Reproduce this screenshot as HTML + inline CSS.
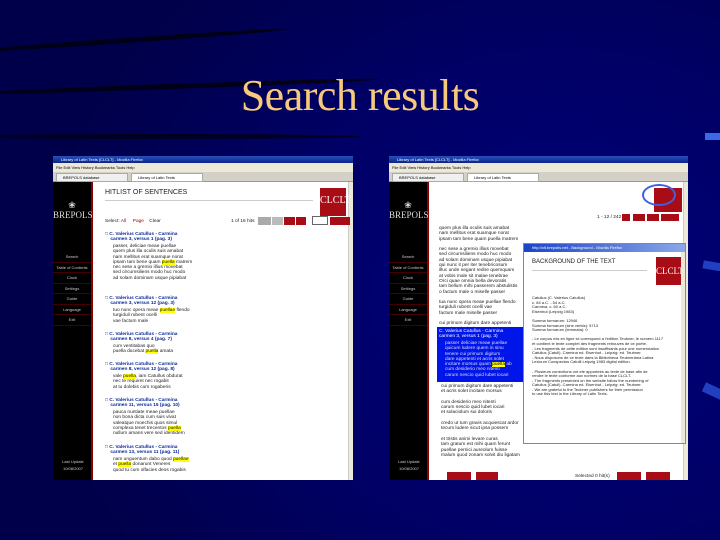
<!DOCTYPE html>
<html><head><meta charset="utf-8"><style>
*{margin:0;padding:0;box-sizing:border-box}
body{width:720px;height:540px;overflow:hidden;position:relative;font-family:"Liberation Sans",sans-serif;
background:radial-gradient(ellipse 520px 440px at 560px 300px,#00007c 0%,#000066 55%,#00004a 100%);}
.ab{position:absolute}
.streak{position:absolute;height:5px;border-radius:50%;background:#000018}
h1{position:absolute;left:0;width:720px;top:70px;text-align:center;font:44px "Liberation Serif",serif;color:#f7c97a;font-weight:normal;letter-spacing:-0.5px}
.win{position:absolute;background:#fff;overflow:hidden}
.tb{position:absolute;left:0;right:0;top:0;height:7px;background:linear-gradient(#2a4fb8,#0a248a);color:#fff;font-size:4px;line-height:7px;padding-left:8px}
.mb{position:absolute;left:0;right:0;top:7px;height:9px;background:#ece9d8;font-size:4px;line-height:9px;padding-left:3px;color:#000}
.tabs{position:absolute;left:0;right:0;top:16px;height:10px;background:#d4d0c8;border-bottom:1px solid #999}
.tab{position:absolute;top:1px;height:9px;background:#f0f0f0;border:1px solid #aaa;font-size:4px;line-height:8px;padding-left:6px}
.side{position:absolute;left:0;top:26px;bottom:0;width:40px;background:#000;border-right:2px solid #8b0000;color:#ccc;font-size:4px}
.side div{height:10.5px;line-height:10px;text-align:center;border-bottom:1px solid #400}
.brep{font:9px "Liberation Serif",serif;color:#ddd;text-align:center;margin-top:18px;border:none!important;height:auto!important}
.t{position:absolute;font-size:4.8px;line-height:5.3px;color:#222;white-space:nowrap}
.lk{color:#0a2a9a;font-weight:bold}
.hl{background:#ff0}
.red{position:absolute;background:#a80d16}
.sb{position:absolute;right:0;top:26px;bottom:0;width:5px;background:#ece9d8;border-left:1px solid #ccc}
</style></head><body>
<div class="streak" style="left:-40px;top:38px;width:330px;transform:rotate(-4deg)"></div>
<div class="streak" style="left:-40px;top:84px;width:420px;transform:rotate(-2deg)"></div>
<div class="streak" style="left:-40px;top:134px;width:400px;opacity:.8"></div>
<div class="ab" style="left:705px;top:133px;width:15px;height:7px;background:#3a6ae8"></div>
<div class="ab" style="left:703px;top:262px;width:20px;height:8px;background:#2040c0;transform:rotate(10deg)"></div>
<div class="ab" style="left:703px;top:386px;width:20px;height:10px;background:#2040c0;transform:rotate(25deg)"></div>
<h1>Search results</h1>

<!-- LEFT -->
<div class="win" style="left:53px;top:156px;width:300px;height:324px">
<div class="tb">Library of Latin Texts [CLCLT] - Mozilla Firefox</div>
<div class="mb">File Edit View History Bookmarks Tools Help</div>
<div class="tabs"><div class="tab" style="left:3px;width:72px">BREPOLS database</div><div class="tab" style="left:78px;width:72px;background:#fff">Library of Latin Texts</div></div>
<div class="side"><div class="brep">&#10048;<br>BREPOLS</div><div style="margin-top:32px">Search</div><div>Table of Contents</div><div>Clock</div><div>Settings</div><div>Guide</div><div>Language</div><div>Exit</div>
<div style="position:absolute;bottom:8px;width:40px;border:none;line-height:7px;height:auto">Last Update<br>10/08/2007</div></div>
<div class="sb"></div>
<div class="t" style="left:52px;top:34px;font-size:7px;color:#222">HITLIST OF SENTENCES</div>
<div class="ab" style="left:52px;top:44px;width:208px;height:1px;background:#ccc"></div>
<div class="red" style="left:267px;top:32px;width:26px;height:28px;color:#fff;font:10px 'Liberation Serif',serif;text-align:center;line-height:26px">CLCLT</div>
<div class="t" style="left:52px;top:63px">Select: <span style="color:#a00">All</span> &nbsp;&nbsp;&nbsp; <span style="color:#a00">Page</span> &nbsp;&nbsp; Clear</div>
<div class="ab" style="left:205px;top:61px;width:13px;height:8px;background:#aaa"></div>
<div class="ab" style="left:219px;top:61px;width:11px;height:8px;background:#bbb"></div>
<div class="red" style="left:231px;top:61px;width:11px;height:8px"></div>
<div class="red" style="left:243px;top:61px;width:10px;height:8px"></div>
<div class="ab" style="left:259px;top:60px;width:16px;height:9px;border:1px solid #666"></div>
<div class="red" style="left:277px;top:61px;width:20px;height:8px"></div>
<div class="t" style="left:178px;top:63px">1 of 16 hits</div>
<div class="t" style="left:52px;top:76px">&#9633; <span class="lk">C. Valerius Catullus - Carmina<br>&nbsp;&nbsp;&nbsp;&nbsp;carmen 3, versus 1 (pag. 3)</span></div>
<div class="t" style="left:60px;top:88px">passer, deliciae meae puellae<br>quem plus illa oculis suis amabat<br>nam mellitus erat suamque norat<br>ipsam tam bene quam <span class="hl">puella</span> matrem<br>nec sese a gremio illius movebat<br>sed circumsiliens modo huc modo<br>ad solam dominam usque pipiabat</div>
<div class="t" style="left:52px;top:140px">&#9633; <span class="lk">C. Valerius Catullus - Carmina<br>&nbsp;&nbsp;&nbsp;&nbsp;carmen 3, versus 12 (pag. 3)</span></div>
<div class="t" style="left:60px;top:152px">tuo nunc opera meae <span class="hl">puellae</span> flendo<br>turgiduli rubent ocelli<br>vae factum male</div>
<div class="t" style="left:52px;top:176px">&#9633; <span class="lk">C. Valerius Catullus - Carmina<br>&nbsp;&nbsp;&nbsp;&nbsp;carmen 8, versus 4 (pag. 7)</span></div>
<div class="t" style="left:60px;top:188px">cum ventitabas quo<br>puella ducebat <span class="hl">puella</span> amata</div>
<div class="t" style="left:52px;top:206px">&#9633; <span class="lk">C. Valerius Catullus - Carmina<br>&nbsp;&nbsp;&nbsp;&nbsp;carmen 8, versus 12 (pag. 8)</span></div>
<div class="t" style="left:60px;top:218px">vale <span class="hl">puella</span>, iam Catullus obdurat<br>nec te requiret nec rogabit<br>at tu dolebis cum rogaberis</div>
<div class="t" style="left:52px;top:242px">&#9633; <span class="lk">C. Valerius Catullus - Carmina<br>&nbsp;&nbsp;&nbsp;&nbsp;carmen 11, versus 15 (pag. 10)</span></div>
<div class="t" style="left:60px;top:254px">pauca nuntiate meae puellae<br>non bona dicta cum suis vivat<br>valeatque moechis quos simul<br>complexa tenet trecentos <span class="hl">puella</span><br>nullum amans vere sed identidem</div>
<div class="t" style="left:52px;top:289px">&#9633; <span class="lk">C. Valerius Catullus - Carmina<br>&nbsp;&nbsp;&nbsp;&nbsp;carmen 13, versus 11 (pag. 11)</span></div>
<div class="t" style="left:60px;top:301px">nam unguentum dabo quod <span class="hl">puellae</span><br>et <span class="hl">puella</span> donarunt Veneres<br>quod tu cum olfacies deos rogabis</div>
</div>

<!-- RIGHT -->
<div class="win" style="left:389px;top:156px;width:299px;height:324px">
<div class="tb">Library of Latin Texts [CLCLT] - Mozilla Firefox</div>
<div class="mb">File Edit View History Bookmarks Tools Help</div>
<div class="tabs"><div class="tab" style="left:3px;width:72px">BREPOLS database</div><div class="tab" style="left:78px;width:72px;background:#fff">Library of Latin Texts</div></div>
<div class="side"><div class="brep">&#10048;<br>BREPOLS</div><div style="margin-top:32px">Search</div><div>Table of Contents</div><div>Clock</div><div>Settings</div><div>Guide</div><div>Language</div><div>Exit</div>
<div style="position:absolute;bottom:8px;width:40px;border:none;line-height:7px;height:auto">Last Update<br>10/08/2007</div></div>
<div class="sb"></div>
<div class="red" style="left:265px;top:32px;width:28px;height:24px"></div>
<div class="ab" style="left:253px;top:28px;width:34px;height:22px;border:2px solid #4060e0;border-radius:50%"></div>
<div class="red" style="left:233px;top:58px;width:8px;height:7px"></div>
<div class="red" style="left:244px;top:58px;width:12px;height:7px"></div>
<div class="red" style="left:258px;top:58px;width:12px;height:7px"></div>
<div class="red" style="left:272px;top:58px;width:18px;height:7px"></div>
<div class="t" style="left:208px;top:59px">1 - 12 / 242</div>
<div class="t" style="left:50px;top:70px">quem plus illa oculis suis amabat<br>nam mellitus erat suamque norat<br>ipsam tam bene quam puella matrem<br><br>nec sese a gremio illius movebat<br>sed circumsiliens modo huc modo<br>ad solam dominam usque pipiabat<br>qui nunc it per iter tenebricosum<br>illuc unde negant redire quemquam<br>at vobis male sit malae tenebrae<br>Orci quae omnia bella devoratis<br>tam bellum mihi passerem abstulistis<br>o factum male o miselle passer<br><br>tua nunc opera meae puellae flendo<br>turgiduli rubent ocelli vae<br>factum male miselle passer<br><br>cui primum digitum dare appetenti<br>et acris solet incitare morsus</div>
<div class="ab" style="left:48px;top:171px;width:86px;height:55px;background:#0015e8"></div>
<div class="t" style="left:50px;top:173px;color:#fff">C. Valerius Catullus - Carmina<br>carmen 3, versus 1 (pag. 3)</div>
<div class="t" style="left:56px;top:185px;color:#dde">passer deliciae meae puellae<br>quicum ludere quem in sinu<br>tenere cui primum digitum<br>dare appetenti et acris solet<br>incitare morsus quam <span class="hl" style="color:#000">puella</span> ab<br>cum desiderio meo nitenti<br>carum nescio quid lubet iocari</div>
<div class="t" style="left:52px;top:228px">cui primum digitum dare appetenti<br>et acris solet incitare morsus<br><br>cum desiderio meo nitenti<br>carum nescio quid lubet iocari<br>et solaciolum sui doloris<br><br>credo ut tum gravis acquiescat ardor<br>tecum ludere sicut ipsa possem<br><br>et tristis animi levare curas<br>tam gratum est mihi quam ferunt<br>puellae pernici aureolum fuisse<br>malum quod zonam solvit diu ligatam</div>
<div class="red" style="left:58px;top:316px;width:24px;height:8px"></div>
<div class="red" style="left:87px;top:316px;width:22px;height:8px"></div>
<div class="t" style="left:186px;top:318px">Selected 0 hit(s)</div>
<div class="red" style="left:228px;top:316px;width:24px;height:8px"></div>
<div class="red" style="left:257px;top:316px;width:24px;height:8px"></div>
<!-- popup -->
<div class="ab" style="left:134px;top:87px;width:163px;height:201px;background:#fff;border:1px solid #888">
<div class="tb" style="height:8px;background:linear-gradient(90deg,#1a44c8,#8aa8e8)">http://clt.brepolis.net - Background - Mozilla Firefox</div>
<div class="t" style="left:8px;top:16px;font-size:6px;color:#222">BACKGROUND OF THE TEXT</div>
<div class="ab" style="left:8px;top:26px;width:115px;height:1px;background:#ccc"></div>
<div class="red" style="left:132px;top:13px;width:26px;height:28px;color:#fff;font:9px 'Liberation Serif',serif;text-align:center;line-height:28px">CLCLT</div>
<div class="t" style="left:8px;top:52px;font-size:4px;line-height:4.6px">Catullus (C. Valerius Catullus)<br>c. 84 a.C. - 54 a.C.<br>Carmina, c. 60 a.C.<br>Eisenhut (Leipzig 1983)<br><br>Summa formarum: 12946<br>Summa formarum (sine verbis): 5713<br>Summa formarum (lemmata): 0<br><br>- Le corpus mis en ligne ici correspond a l'edition Teubner, le numero 1117<br>et contient le texte complet des fragments retrouves de ce poete.<br>- Les fragments de cette edition sont insuffisants pour une numerotation<br>Catullus (Catull). Carmina ed. Eisenhut - Leipzig: ed. Teubner.<br>- Nous disposons de ce texte dans la Bibliotheca Teubneriana Latina<br>Lexicum Conspectus Catulli Leipzig 1983 digital edition.<br><br>- Plusieurs corrections ont ete apportees au texte de base afin de<br>rendre le texte conforme aux normes de la base CLCLT.<br>- The fragments presented on the website follow the numbering of<br>Catullus (Catull). Carmina ed. Eisenhut - Leipzig: ed. Teubner.<br>- We are grateful to the Teubner publishers for their permission<br>to use this text in the Library of Latin Texts.</div>
<div class="ab" style="right:0;top:8px;bottom:0;width:4px;background:#ece9d8"></div>
</div>
</div>
</body></html>
